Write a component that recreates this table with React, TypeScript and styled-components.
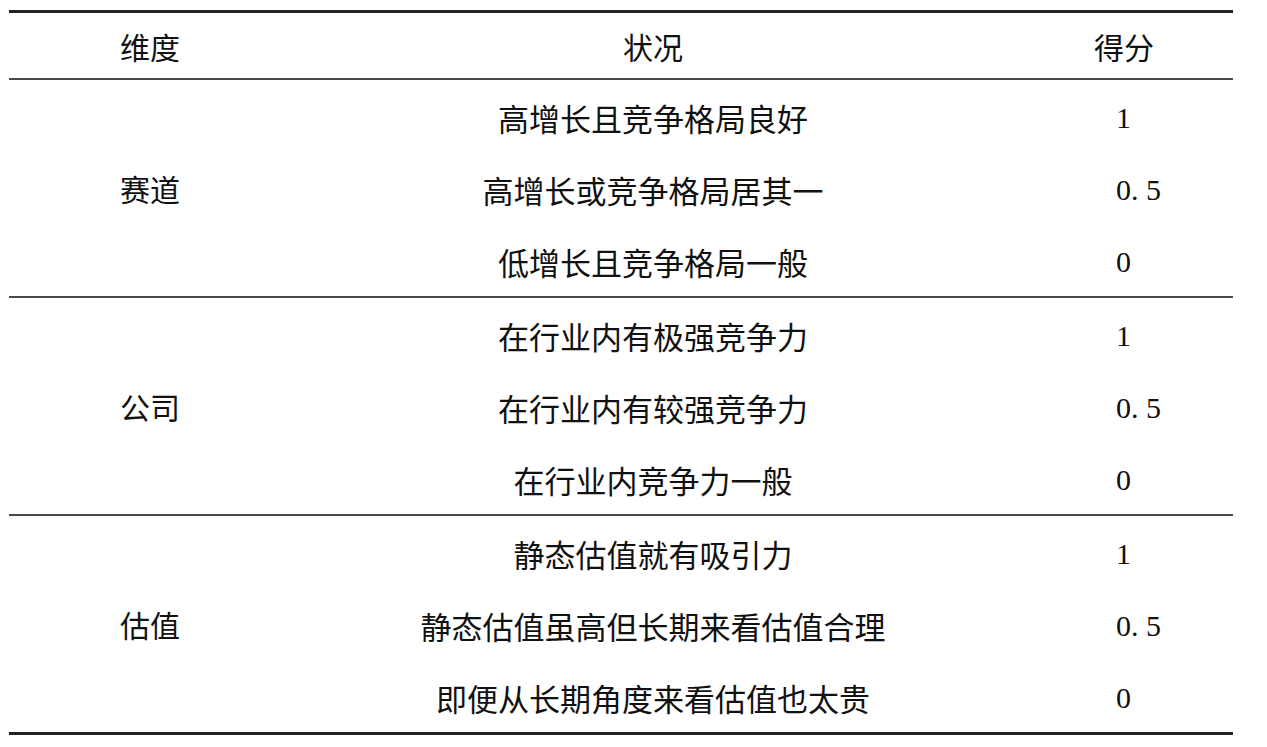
import React from "react";
import styled, { createGlobalStyle } from "styled-components";

const Global = createGlobalStyle`
  html, body { margin: 0; padding: 0; background: #ffffff; }
  body { font-family: "Noto Sans CJK SC", "Noto Sans", sans-serif; color: #111; }
`;

const Page = styled.div`
  padding: 10px 0 0 9px;
  width: 1267px;
  height: 747px;
  box-sizing: border-box;
`;

const Table = styled.div`
  width: 1224px;
  border-top: 3px solid #222;
  border-bottom: 3px solid #222;
`;

const COLS = "282px 724px 218px";

const HeaderRow = styled.div`
  display: grid;
  grid-template-columns: ${COLS};
  height: 65px;
  border-bottom: 2px solid #4a4a4a;
`;

const HeadCell = styled.div`
  display: flex;
  align-items: center;
  justify-content: center;
  font-family: "Noto Sans CJK SC", sans-serif;
  font-size: 30px;
  color: #111;
`;

const Group = styled.div<{ $last?: boolean }>`
  display: grid;
  grid-template-columns: ${COLS};
  grid-template-rows: repeat(3, 72px);
  border-bottom: ${(p) => (p.$last ? "none" : "2px solid #4a4a4a")};
`;

const DimCell = styled.div`
  grid-row: 1 / span 3;
  grid-column: 1;
  display: flex;
  align-items: center;
  justify-content: center;
  font-family: "Noto Sans CJK SC", serif;
  font-size: 30px;
  color: #111;
`;

const StatusCell = styled.div`
  grid-column: 2;
  display: flex;
  align-items: center;
  justify-content: center;
  font-family: "Noto Sans CJK SC", serif;
  font-size: 31px;
  color: #111;
  padding-top: 2px;
`;

const ScoreCell = styled.div`
  grid-column: 3;
  display: flex;
  align-items: center;
  justify-content: flex-start;
  padding-left: 101px;
  padding-top: 3px;
  font-family: "Liberation Serif", "Times New Roman", serif;
  font-size: 30px;
  color: #111;
`;

const data = [
  {
    dim: "赛道",
    rows: [
      ["高增长且竞争格局良好", "1"],
      ["高增长或竞争格局居其一", "0. 5"],
      ["低增长且竞争格局一般", "0"],
    ],
  },
  {
    dim: "公司",
    rows: [
      ["在行业内有极强竞争力", "1"],
      ["在行业内有较强竞争力", "0. 5"],
      ["在行业内竞争力一般", "0"],
    ],
  },
  {
    dim: "估值",
    rows: [
      ["静态估值就有吸引力", "1"],
      ["静态估值虽高但长期来看估值合理", "0. 5"],
      ["即便从长期角度来看估值也太贵", "0"],
    ],
  },
];

export default function App() {
  return (
    <>
      <Global />
      <Page>
        <Table>
          <HeaderRow>
            <HeadCell>维度</HeadCell>
            <HeadCell>状况</HeadCell>
            <HeadCell>得分</HeadCell>
          </HeaderRow>
          {data.map((g, gi) => (
            <Group key={g.dim} $last={gi === data.length - 1}>
              <DimCell>{g.dim}</DimCell>
              {g.rows.map(([s, v]) => (
                <React.Fragment key={s}>
                  <StatusCell>{s}</StatusCell>
                  <ScoreCell>{v}</ScoreCell>
                </React.Fragment>
              ))}
            </Group>
          ))}
        </Table>
      </Page>
    </>
  );
}
